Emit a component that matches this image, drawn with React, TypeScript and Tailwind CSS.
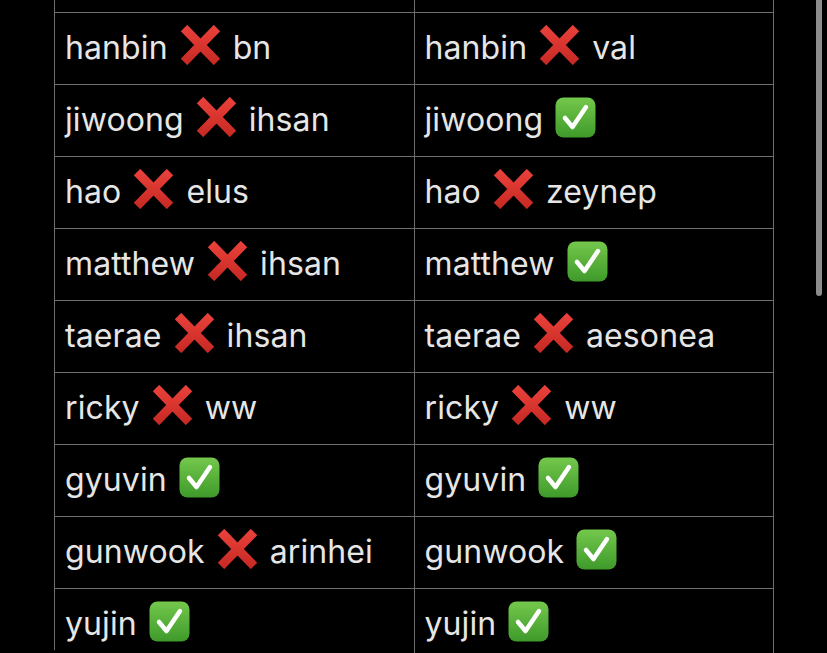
import React from "react";

type Cell = { name: string; ok: boolean; other?: string };

const rows: [Cell, Cell][] = [
  [{ name: "hanbin", ok: false, other: "bn" }, { name: "hanbin", ok: false, other: "val" }],
  [{ name: "jiwoong", ok: false, other: "ihsan" }, { name: "jiwoong", ok: true }],
  [{ name: "hao", ok: false, other: "elus" }, { name: "hao", ok: false, other: "zeynep" }],
  [{ name: "matthew", ok: false, other: "ihsan" }, { name: "matthew", ok: true }],
  [{ name: "taerae", ok: false, other: "ihsan" }, { name: "taerae", ok: false, other: "aesonea" }],
  [{ name: "ricky", ok: false, other: "ww" }, { name: "ricky", ok: false, other: "ww" }],
  [{ name: "gyuvin", ok: true }, { name: "gyuvin", ok: true }],
  [{ name: "gunwook", ok: false, other: "arinhei" }, { name: "gunwook", ok: true }],
  [{ name: "yujin", ok: true }, { name: "yujin", ok: true }],
];

function Cross() {
  return (
    <svg width="41" height="40" viewBox="0 0 41 40" className="shrink-0 -translate-y-[3px]">
      <defs>
        <linearGradient id="xr" x1="0" y1="0" x2="0" y2="1">
          <stop offset="0" stopColor="#e8403a" />
          <stop offset="1" stopColor="#c92a24" />
        </linearGradient>
      </defs>
      <path d="M4 3 L37 37 M37 3 L4 37" stroke="url(#xr)" strokeWidth="9" strokeLinecap="butt" fill="none" />
    </svg>
  );
}

function Check() {
  return (
    <svg width="41" height="41" viewBox="0 0 41 41" className="shrink-0 -translate-y-[3px]">
      <defs>
        <linearGradient id="gr" x1="0" y1="0" x2="0" y2="1">
          <stop offset="0" stopColor="#74c84c" />
          <stop offset="1" stopColor="#3e9a2a" />
        </linearGradient>
      </defs>
      <rect x="0.5" y="0.5" width="40" height="40" rx="8" fill="url(#gr)" />
      <path d="M10 21 L17.5 30 L31 10" stroke="#fff" strokeWidth="4.5" fill="none" strokeLinecap="round" strokeLinejoin="round" />
    </svg>
  );
}

function Entry({ c }: { c: Cell }) {
  return (
    <div className="flex h-[72px] items-center gap-3 pl-[10px] pb-[2px]">
      <span>{c.name}</span>
      {c.ok ? <Check /> : <Cross />}
      {c.other && <span>{c.other}</span>}
    </div>
  );
}

export default function App() {
  return (
    <div
      className="relative h-[653px] w-[827px] overflow-hidden bg-black text-[32px] tracking-[0.1px] text-[#e6e6e6]"
      style={{ fontFamily: "Inter, 'Liberation Sans', sans-serif" }}
    >
      <div className="ml-[54px] w-[720px] border-l border-[#6e6e6e]">
        <div className="grid h-[13px] grid-cols-2 border-b border-[#6e6e6e]">
          <div className="border-r border-[#6e6e6e]" />
          <div className="border-r border-[#6e6e6e]" />
        </div>
        {rows.map((r, i) => (
          <div
            key={i}
            className={
              i === rows.length - 1
                ? "grid h-[61px] grid-cols-2"
                : "grid h-[72px] grid-cols-2 border-b border-[#6e6e6e]"
            }
          >
            <div className="border-r border-[#6e6e6e]">
              <Entry c={r[0]} />
            </div>
            <div className="border-r border-[#6e6e6e]">
              <Entry c={r[1]} />
            </div>
          </div>
        ))}
      </div>
      <div className="absolute right-[5px] top-0 h-[296px] w-[6px] rounded-b-full bg-[#8c8c8c]" />
    </div>
  );
}
